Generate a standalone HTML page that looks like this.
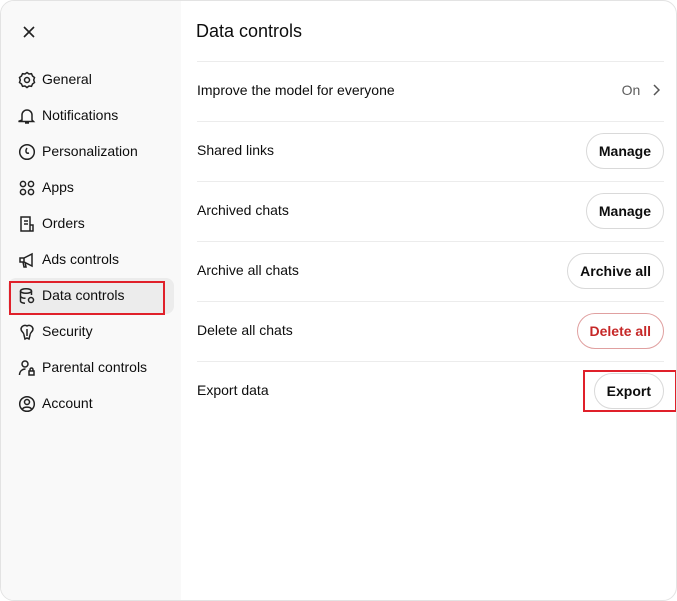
<!DOCTYPE html><html><head><style>
body{margin:0;width:677px;height:601px;overflow:hidden;background:#fff;font-family:"Liberation Sans",sans-serif;color:#0d0d0d}
.wrap{position:absolute;left:0;top:0;width:677px;height:601px;border-radius:14px;overflow:hidden;border:1px solid #e3e3e3;box-sizing:border-box;background:#fff}
.side{position:absolute;left:0;top:0;width:180px;height:601px;background:#f9f9f9}
.item{position:absolute;left:7px;width:166px;height:36px;font-size:14px;line-height:35px;border-radius:8px}
.item span{position:absolute;left:34px}
.item svg{position:absolute;left:10px;top:9px}
.sel{background:#ececec}
.main{position:absolute;left:195px;top:0;width:468px}
h1{position:absolute;top:20px;margin:0;font-size:18px;font-weight:normal}
.row{position:absolute;left:1px;width:467px;height:60px;border-top:1px solid #ececec;font-size:14px;line-height:57px}
.btn{position:absolute;right:0;top:11px;height:34px;line-height:34px;border:1px solid #d9d9d9;border-radius:18px;padding:0 12px;font-weight:bold;font-size:14px;background:#fff}
.red{position:absolute;border:2px solid #e0202a;box-sizing:border-box}
</style></head><body><div class="wrap">
<div class="side">
<svg style="position:absolute;left:21px;top:24px" width="14" height="14" viewBox="0 0 14 14"><path d="M2 2L12 12M12 2L2 12" stroke="#222" stroke-width="1.6"/></svg>
<div class="item" style="top:61px"><svg width="18" height="18" viewBox="0 0 18 18" fill="none" stroke="#222" stroke-width="1.5"><circle cx="9" cy="9" r="2.5"/><path d="M9 1.5l2 1.5 2.5-.3 1 2.3 2 1.5-.8 2.5.8 2.5-2 1.5-1 2.3-2.5-.3-2 1.5-2-1.5-2.5.3-1-2.3-2-1.5.8-2.5-.8-2.5 2-1.5 1-2.3 2.5.3z"/></svg><span>General</span></div>
<div class="item" style="top:97px"><svg width="18" height="18" viewBox="0 0 18 18" fill="none" stroke="#222" stroke-width="1.5"><path d="M4 13V8a5 5 0 0110 0v5l1.5 1.5h-15zM7 16h4"/></svg><span>Notifications</span></div>
<div class="item" style="top:133px"><svg width="18" height="18" viewBox="0 0 18 18" fill="none" stroke="#222" stroke-width="1.5"><circle cx="9" cy="9" r="7.3"/><path d="M9 5c-2 3-1 6 2 5"/></svg><span>Personalization</span></div>
<div class="item" style="top:169px"><svg width="18" height="18" viewBox="0 0 18 18" fill="none" stroke="#222" stroke-width="1.5"><circle cx="5" cy="5" r="2.6"/><circle cx="13" cy="5" r="2.6"/><circle cx="5" cy="13" r="2.6"/><circle cx="13" cy="13" r="2.6"/></svg><span>Apps</span></div>
<div class="item" style="top:205px"><svg width="18" height="18" viewBox="0 0 18 18" fill="none" stroke="#222" stroke-width="1.5"><path d="M3 2h9v14H3zM6 6h4M6 9h4M12 10h3v6h-3"/></svg><span>Orders</span></div>
<div class="item" style="top:241px"><svg width="18" height="18" viewBox="0 0 18 18" fill="none" stroke="#222" stroke-width="1.5"><path d="M2 7h4l8-4v12l-8-4H2zM6 7v4M5 11l1 5h2l-1-5"/></svg><span>Ads controls</span></div>
<div class="item sel" style="top:277px"><svg width="18" height="18" viewBox="0 0 18 18" fill="none" stroke="#222" stroke-width="1.5"><ellipse cx="8" cy="4" rx="5.5" ry="2.3"/><path d="M2.5 4v10c0 1.3 2 2.2 4.5 2.3M13.5 4v4M2.5 9c0 1.3 2.5 2.3 5 2.3"/><circle cx="13" cy="13" r="2.5"/></svg><span>Data controls</span></div>
<div class="item" style="top:313px"><svg width="18" height="18" viewBox="0 0 18 18" fill="none" stroke="#222" stroke-width="1.5"><path d="M9 3a4 4 0 00-6 3c0 3 3 3 3 6l1 4 2-1 2 1 1-4c0-3 3-3 3-6a4 4 0 00-6-3zM9 6v7"/></svg><span>Security</span></div>
<div class="item" style="top:349px"><svg width="18" height="18" viewBox="0 0 18 18" fill="none" stroke="#222" stroke-width="1.5"><circle cx="7" cy="5" r="3"/><path d="M1.5 16c0-4 3-6 6-6M11 12h5v4h-5zM12 12v-1.5a1.5 1.5 0 013 0V12"/></svg><span>Parental controls</span></div>
<div class="item" style="top:385px"><svg width="18" height="18" viewBox="0 0 18 18" fill="none" stroke="#222" stroke-width="1.5"><circle cx="9" cy="9" r="7.3"/><circle cx="9" cy="7" r="2.5"/><path d="M4.5 14c1.5-2.5 7.5-2.5 9 0"/></svg><span>Account</span></div>
</div>
<div class="red" style="left:8px;top:280px;width:156px;height:34px"></div>
<div class="main">
<h1>Data controls</h1>
<div class="row" style="top:60px">Improve the model for everyone<span style="position:absolute;right:4px;color:#5d5d5d">On&nbsp;&nbsp;&nbsp;<svg width="8" height="12" viewBox="0 0 8 12" style="vertical-align:-1px"><path d="M2 1l5 5-5 5" stroke="#555" stroke-width="1.5" fill="none"/></svg></span></div>
<div class="row" style="top:120px">Shared links<span class="btn">Manage</span></div>
<div class="row" style="top:180px">Archived chats<span class="btn">Manage</span></div>
<div class="row" style="top:240px">Archive all chats<span class="btn">Archive all</span></div>
<div class="row" style="top:300px">Delete all chats<span class="btn" style="color:#c62828;border-color:#e0a0a0">Delete all</span></div>
<div class="row" style="top:360px">Export data<span class="btn">Export</span></div>
</div>
<div class="red" style="left:582px;top:369px;width:94px;height:42px"></div>
</div></body></html>
